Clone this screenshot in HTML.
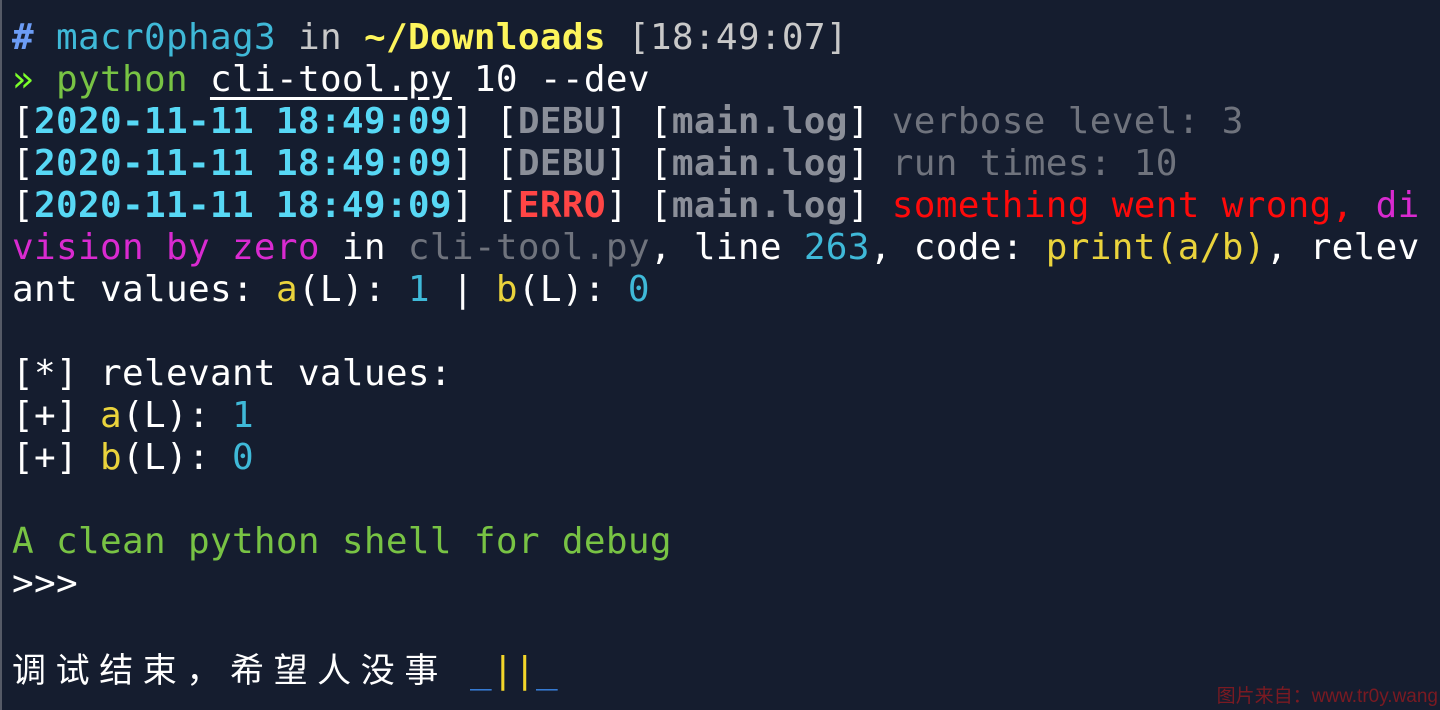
<!DOCTYPE html>
<html><head><meta charset="utf-8"><style>
html,body{margin:0;padding:0;background:#151d2f;width:1440px;height:710px;overflow:hidden}
body{border-left:2px solid #555a66;box-sizing:border-box;position:relative}
pre{margin:0;position:absolute;left:10px;top:17px;font-family:"DejaVu Sans Mono","Liberation Mono",monospace;font-size:36px;line-height:42px;letter-spacing:0.32px;color:#ffffff;white-space:pre}
.b{font-weight:bold}
.bl{color:#6c9cf5}.cy{color:#3fb9d8}.gr{color:#c8c8c8}.ye{color:#fdf55c}.lg{color:#78c344}.lc{color:#57d8f5}
.dg{color:#8b8f99}.mg{color:#6f737d}.rd{color:#ff0a0a}.er{color:#ff4545}.pk{color:#d92ad0}.yl{color:#ead33c}
.u{text-decoration:underline;text-underline-offset:6px}
.cj{display:inline-block;width:43.6px;text-align:left;font-family:"Noto Sans CJK SC",sans-serif;font-size:34px;letter-spacing:0}
.wm{position:absolute;right:2px;bottom:2px;color:#7a1a22;font-family:"Liberation Sans","Noto Sans CJK SC",sans-serif;font-size:19px}
</style></head><body>
<pre><span class="bl b">#</span> <span class="cy">macr0phag3</span> <span class="gr">in</span> <span class="ye b">~/Downloads</span> <span class="gr">[18:49:07]</span>
<span style="color:#7cff2a">»</span> <span class="lg">python</span> <span class="u">cli-tool.py</span> 10 --dev
[<span class="lc b">2020-11-11 18:49:09</span>] [<span class="dg b">DEBU</span>] [<span class="dg b">main.log</span>] <span class="mg">verbose level: 3</span>
[<span class="lc b">2020-11-11 18:49:09</span>] [<span class="dg b">DEBU</span>] [<span class="dg b">main.log</span>] <span class="mg">run times: 10</span>
[<span class="lc b">2020-11-11 18:49:09</span>] [<span class="er b">ERRO</span>] [<span class="dg b">main.log</span>] <span class="rd">something went wrong, </span><span class="pk">di</span>
<span class="pk">vision by zero</span> in <span class="mg">cli-tool.py</span>, line <span class="cy">263</span>, code: <span class="yl">print(a/b)</span>, relev
ant values: <span class="yl">a</span>(L): <span class="cy">1</span> | <span class="yl">b</span>(L): <span class="cy">0</span>

[*] relevant values:
[+] <span class="yl">a</span>(L): <span class="cy">1</span>
[+] <span class="yl">b</span>(L): <span class="cy">0</span>

<span class="lg">A clean python shell for debug</span>
&gt;&gt;&gt;

<span class="cj">调</span><span class="cj">试</span><span class="cj">结</span><span class="cj">束</span><span class="cj">，</span><span class="cj">希</span><span class="cj">望</span><span class="cj">人</span><span class="cj">没</span><span class="cj">事</span> <span style="color:#3a86e8">_</span><span style="color:#f3d62a">||</span><span style="color:#3a86e8">_</span></pre>
<div class="wm">图片来自：www.tr0y.wang</div>
</body></html>
